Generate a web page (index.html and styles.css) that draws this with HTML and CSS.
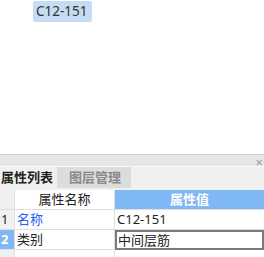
FILE: index.html
```html
<!DOCTYPE html>
<html lang="zh">
<head>
  <meta charset="UTF-8">
  <title>属性列表</title>
  <link rel="stylesheet" href="styles.css">
</head>
<body>
  <!-- 绘图区 -->
  <div class="canvas">
    <span class="tag">C12-151</span>
  </div>

  <!-- 属性面板 -->
  <div class="panel">
    <div class="panel-bar">
      <span class="close">×</span>
    </div>
    <div class="tabs">
      <div class="tab active">属性列表</div>
      <div class="tab">图层管理</div>
    </div>
    <div class="grid">
      <div class="cell num"></div>
      <div class="cell head">属性名称</div>
      <div class="cell head val">属性值</div>

      <div class="cell num">1</div>
      <div class="cell name link">名称</div>
      <div class="cell value">C12-151</div>

      <div class="cell num sel">2</div>
      <div class="cell name">类别</div>
      <div class="cell value editing">中间层筋</div>

      <div class="cell num"></div>
      <div class="cell name"></div>
      <div class="cell value"></div>
    </div>
  </div>
</body>
</html>
```

FILE: styles.css
```css
body {
  margin: 0;
  background-color: #fff;
  font-family: "Noto Sans", "Noto Sans CJK SC", sans-serif;
  font-size: 13px;
  color: #222;
}
.canvas {
  height: 153px;
  padding: 1px 0 0 33px;
}
.tag {
  display: inline-block;
  background-color: #c5dcf2;
  color: #333;
  border-radius: 2px;
  height: 21px;
  line-height: 21px;
  padding: 0 4px 0 3px;
  font-size: 13.5px;
}
.panel {
  border-top: 1px solid #cfcfcf;
}
.panel-bar {
  height: 11px;
  background-color: #e6e6e6;
  display: flex;
  justify-content: flex-end;
  align-items: center;
  padding-right: 1px;
}
.close {
  color: #9a9a9a;
  font-size: 13px;
  line-height: 11px;
  padding-top: 3px;
}
.tabs {
  height: 24px;
  background-color: #f0f0f0;
  display: flex;
  align-items: flex-end;
  border-top: 1px solid #fafafa;
  box-sizing: border-box;
}
.tab {
  height: 21px;
  line-height: 21px;
  font-weight: bold;
  font-size: 13px;
  padding: 0 2px 0 1px;
  color: #222;
  margin-bottom: 2px;
}
.tab + .tab {
  background-color: #dcdcdc;
  color: #8a8a8a;
  padding: 0 10px 0 12px;
  margin-left: 2px;
}
.grid {
  display: grid;
  grid-template-columns: 15px 100px 1fr;
  grid-auto-rows: 20px;
  height: 67px;
  overflow: hidden;
}
.cell {
  border-right: 1px solid #dedede;
  border-bottom: 1px solid #dedede;
  line-height: 19px;
  padding-left: 2px;
  white-space: nowrap;
  overflow: hidden;
}
.num {
  background-color: #f0f0f0;
  padding-left: 1px;
}
.head {
  text-align: center;
  padding-left: 0;
  background-color: #fff;
}
.head.val {
  background-color: #80b8f5;
  color: #fff;
  font-weight: bold;
  border-right: none;
}
.link {
  color: #2a5cf2;
}
.sel {
  background-color: #80b8f5;
  color: #fff;
  font-weight: bold;
}
.value {
  border-right: none;
}
.editing {
  border: 2px solid #7a7a7a;
  line-height: 16px;
  padding-left: 1px;
}
```
